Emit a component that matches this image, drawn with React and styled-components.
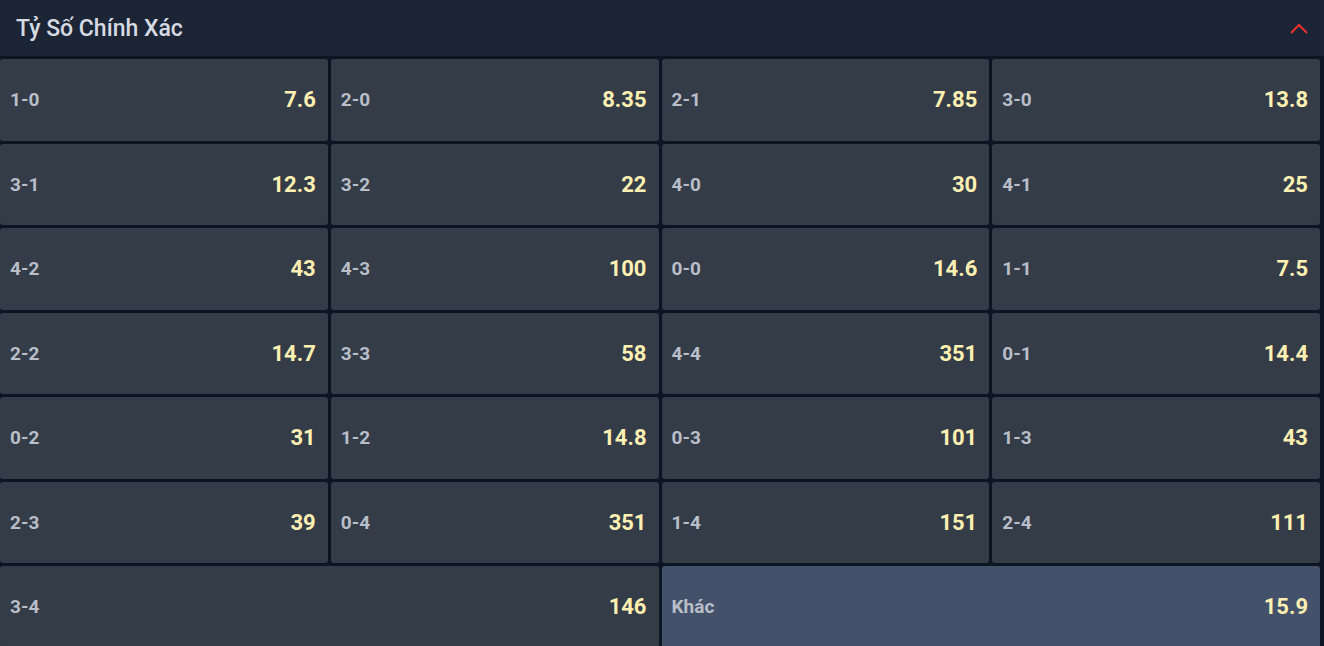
import React from 'react'
import styled, { createGlobalStyle } from 'styled-components'

const GlobalStyle = createGlobalStyle`
  html, body {
    margin: 0;
    padding: 0;
    background-color: #0d1422;
    font-family: Roboto, "Liberation Sans", sans-serif;
  }
`

const Panel = styled.div`
  width: 1324px;
  display: flex;
  flex-direction: column;
  gap: 3px;
`

const Header = styled.div`
  height: 56px;
  display: flex;
  align-items: center;
  justify-content: space-between;
  padding: 0 16px;
  background-color: #1c2535;
  box-sizing: border-box;
`

const Title = styled.div`
  color: #d6dbe3;
  font-size: 23px;
  font-weight: 500;
`

const Grid = styled.div`
  display: grid;
  grid-template-columns: repeat(4, 1fr);
  grid-auto-rows: 81.5px;
  gap: 3px;
  padding-right: 4px;
`

const Cell = styled.div`
  grid-column: span ${p => p.$span || 1};
  display: flex;
  align-items: center;
  justify-content: space-between;
  padding: 0 12px 0 10px;
  border-radius: 3px;
  background-color: ${p => (p.$other ? '#44516a' : '#343c48')};
  cursor: pointer;
`

const Label = styled.span`
  color: #b9bec8;
  font-size: 19px;
  font-weight: 700;
`

const Odds = styled.span`
  color: #fdf0b2;
  font-size: 22px;
  font-weight: 700;
`

const scores = [
  ['1-0', '7.6'], ['2-0', '8.35'], ['2-1', '7.85'], ['3-0', '13.8'],
  ['3-1', '12.3'], ['3-2', '22'], ['4-0', '30'], ['4-1', '25'],
  ['4-2', '43'], ['4-3', '100'], ['0-0', '14.6'], ['1-1', '7.5'],
  ['2-2', '14.7'], ['3-3', '58'], ['4-4', '351'], ['0-1', '14.4'],
  ['0-2', '31'], ['1-2', '14.8'], ['0-3', '101'], ['1-3', '43'],
  ['2-3', '39'], ['0-4', '351'], ['1-4', '151'], ['2-4', '111'],
]

function Chevron() {
  return (
    <svg width="18" height="11" viewBox="0 0 18 11" fill="none">
      <path d="M1 10 L9 2 L17 10" stroke="#e8322f" strokeWidth="2" />
    </svg>
  )
}

export default function App() {
  return (
    <>
      <GlobalStyle />
      <Panel>
        <Header>
          <Title>Tỷ Số Chính Xác</Title>
          <Chevron />
        </Header>
        <Grid>
          {scores.map(([s, o]) => (
            <Cell key={s}>
              <Label>{s}</Label>
              <Odds>{o}</Odds>
            </Cell>
          ))}
          <Cell $span={2}>
            <Label>3-4</Label>
            <Odds>146</Odds>
          </Cell>
          <Cell $span={2} $other>
            <Label>Khác</Label>
            <Odds>15.9</Odds>
          </Cell>
        </Grid>
      </Panel>
    </>
  )
}
